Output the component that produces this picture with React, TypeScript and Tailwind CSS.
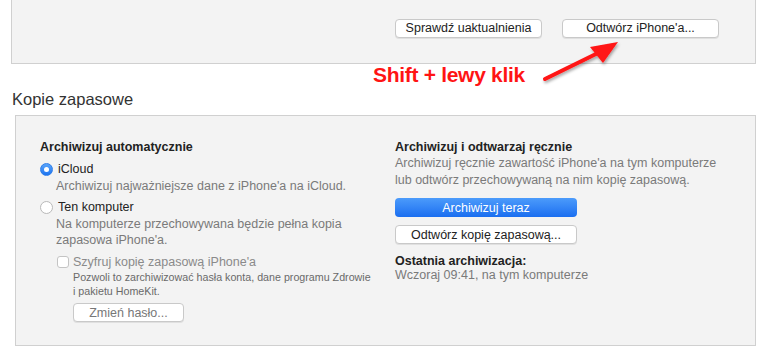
const Btn = ({ children, className = "" }: { children: React.ReactNode; className?: string }) => (
  <div
    className={`flex items-center justify-center h-[19px] bg-white border border-[#c9c9c9] rounded-[4px] shadow-[0_1px_0_rgba(0,0,0,0.08)] text-[12.5px] text-[#222] ${className}`}
  >
    {children}
  </div>
);

const Radio = ({ checked }: { checked?: boolean }) =>
  checked ? (
    <span className="flex items-center justify-center w-[13px] h-[13px] rounded-full bg-gradient-to-b from-[#5aa5fa] to-[#1a73f0] border border-[#2f7ee8]">
      <span className="w-[5px] h-[5px] rounded-full bg-white" />
    </span>
  ) : (
    <span className="w-[13px] h-[13px] rounded-full bg-white border border-[#b9b9b9]" />
  );

export default function App() {
  return (
    <div className="relative w-[769px] h-[357px] bg-white overflow-hidden font-['Liberation_Sans',Arial,sans-serif] text-[#222]">
      {/* top panel */}
      <div className="ml-[11px] mr-[13px] h-[64px] border-x border-b border-[#d0d0d0] bg-[#f3f3f3] flex justify-end items-start pt-[19px] pr-[36px] gap-[20px]">
        <Btn className="w-[147px]">Sprawdź uaktualnienia</Btn>
        <Btn className="w-[157px]">Odtwórz iPhone'a...</Btn>
      </div>

      <div className="ml-[12px] mt-[25px] text-[16.5px] leading-[20px] text-[#333]">Kopie zapasowe</div>

      {/* backups panel */}
      <div className="ml-[15px] mr-[13px] mt-[6px] h-[231px] border border-[#d0d0d0] bg-[#f3f3f3] grid grid-cols-[355px_1fr] pl-[24px] pt-[23px]">
        <div className="flex flex-col text-[12.5px] leading-[16px]">
          <div className="font-semibold text-[#222]">Archiwizuj automatycznie</div>
          <div className="flex items-center gap-[5px] mt-[6px]">
            <Radio checked />
            <span>iCloud</span>
          </div>
          <div className="pl-[16px] mt-[1px] text-[#7a7a7a]">Archiwizuj najważniejsze dane z iPhone'a na iCloud.</div>
          <div className="flex items-center gap-[5px] mt-[5px]">
            <Radio />
            <span>Ten komputer</span>
          </div>
          <div className="pl-[16px] mt-[1px] text-[#7a7a7a]">
            Na komputerze przechowywana będzie pełna kopia
            <br />
            zapasowa iPhone'a.
          </div>
          <div className="flex items-center gap-[4px] mt-[6px] pl-[17px]">
            <span className="w-[12px] h-[12px] rounded-[3px] bg-white border border-[#c4c4c4]" />
            <span className="text-[#8a8a8a]">Szyfruj kopię zapasową iPhone'a</span>
          </div>
          <div className="pl-[33px] text-[10.7px] leading-[14px] text-[#6a6a6a]">
            Pozwoli to zarchiwizować hasła konta, dane programu Zdrowie
            <br />i pakietu HomeKit.
          </div>
          <div className="pl-[33px] mt-[5px]">
            <Btn className="w-[111px] text-[#777]">Zmień hasło...</Btn>
          </div>
        </div>

        <div className="flex flex-col text-[12.5px] leading-[16px]">
          <div className="font-semibold">Archiwizuj i odtwarzaj ręcznie</div>
          <div className="text-[#7a7a7a] leading-[17px]">
            Archiwizuj ręcznie zawartość iPhone'a na tym komputerze
            <br />
            lub odtwórz przechowywaną na nim kopię zapasową.
          </div>
          <div className="mt-[9px] w-[182px] h-[19px] flex items-center justify-center rounded-[4px] bg-gradient-to-b from-[#4c9bfb] to-[#1a6ef0] text-white">
            Archiwizuj teraz
          </div>
          <Btn className="w-[182px] mt-[8px]">Odtwórz kopię zapasową...</Btn>
          <div className="mt-[10px] font-semibold leading-[14px]">Ostatnia archiwizacja:</div>
          <div className="text-[#7a7a7a] leading-[14px]">Wczoraj 09:41, na tym komputerze</div>
        </div>
      </div>

      {/* annotation */}
      <div className="absolute left-[373px] top-[62px] text-[21px] leading-[26px] font-bold text-[#ff1414] tracking-[-0.3px]">
        Shift + lewy klik
      </div>
      <svg className="absolute left-0 top-0" width="769" height="357" viewBox="0 0 769 357">
        <defs>
          <filter id="sh" x="-20%" y="-20%" width="140%" height="140%">
            <feDropShadow dx="1" dy="2" stdDeviation="1.5" floodColor="#000" floodOpacity="0.35" />
          </filter>
        </defs>
        <g filter="url(#sh)">
          <line x1="545" y1="79" x2="600" y2="52" stroke="#ff1414" strokeWidth="4" strokeLinecap="round" />
          <polygon points="618,42 590,47 603,63" fill="#ff1414" />
        </g>
      </svg>
    </div>
  );
}
